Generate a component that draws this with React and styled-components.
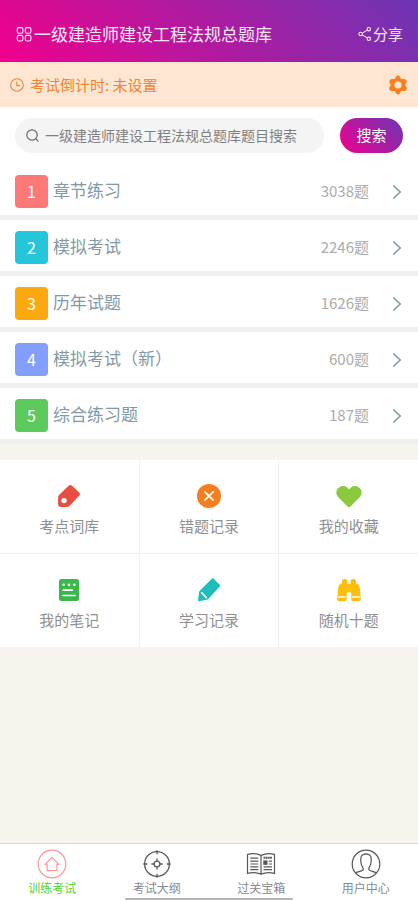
import React, { useState } from 'react';
import styled, { createGlobalStyle } from 'styled-components';

const GlobalStyle = createGlobalStyle`
  * {
    box-sizing: border-box;
  }
  body {
    margin: 0;
    background: #f7f4ed;
    font-family: "Noto Sans CJK SC", "Noto Sans", sans-serif;
  }
  button, input {
    font-family: inherit;
    border: 0;
    padding: 0;
  }
  button {
    background: none;
    cursor: pointer;
  }
  a {
    text-decoration: none;
  }
  svg {
    display: block;
    flex: none;
  }
`;

const Page = styled.div`
  display: flex;
  flex-direction: column;
  min-height: 100vh;
`;

const Header = styled.header`
  display: flex;
  align-items: center;
  justify-content: space-between;
  height: 62px;
  padding: 6px 15px 0 16px;
  background: linear-gradient(45deg, #f0008c, #6c36b4);
  color: #fbe6f6;
`;

const Title = styled.h1`
  display: flex;
  align-items: center;
  gap: 1px;
  margin: 0;
  font-size: 17px;
  line-height: 24px;
  font-weight: 400;
`;

const ShareButton = styled.button`
  display: flex;
  align-items: center;
  gap: 1px;
  color: inherit;
  font-size: 15px;
  line-height: 24px;
`;

const Countdown = styled.div`
  display: flex;
  align-items: center;
  height: 45px;
  padding: 0 10px;
  background: #fee6d2;
  color: #f58230;
  font-size: 15px;
  line-height: 24px;
  span {
    flex: 1;
    margin-left: 6px;
  }
`;

const IconButton = styled.button`
  color: #fa7d1e;
`;

const SearchForm = styled.form`
  display: flex;
  gap: 16px;
  padding: 11px 15px;
  background: #fff;
`;

const SearchBox = styled.label`
  display: flex;
  flex: 1;
  align-items: center;
  gap: 6px;
  height: 35px;
  min-width: 0;
  padding: 0 11px;
  border-radius: 18px;
  background: #f4f4f4;
  color: #666;
  input {
    flex: 1;
    min-width: 0;
    height: 22px;
    margin-bottom: 2px;
    background: none;
    color: #666;
    font-size: 14px;
    outline: 0;
  }
  input::placeholder {
    color: #808080;
    opacity: 1;
  }
`;

const SearchButton = styled.button`
  width: 63px;
  height: 35px;
  padding-bottom: 2px;
  border-radius: 18px;
  background: linear-gradient(45deg, #f0008c, #6c36b4);
  color: #fff;
  font-size: 15px;
  line-height: 24px;
`;

const Rows = styled.div`
  display: flex;
  flex-direction: column;
`;

const Row = styled.a`
  display: flex;
  align-items: center;
  height: 56px;
  padding: 0 16px 0 15px;
  border-bottom: 5px solid #efefef;
  background: #fff;
  color: #829aa5;
`;

const Badge = styled.span`
  width: 33px;
  height: 33px;
  margin-top: 4px;
  border-radius: 4px;
  background: ${props => props.$color};
  color: #fff;
  font-size: 16px;
  line-height: 33px;
  text-align: center;
`;

const RowName = styled.span`
  flex: 1;
  margin-left: 5px;
  font-size: 17px;
  line-height: 24px;
`;

const RowCount = styled.span`
  margin: 2px 23px 0 0;
  color: #acacac;
  font-size: 15px;
  line-height: 24px;
`;

const RowArrow = styled.svg`
  margin-top: 4px;
`;

const Tools = styled.div`
  display: grid;
  grid-template-columns: repeat(3, 1fr);
  gap: 1px;
  margin-top: 16px;
  background: #f0f0f0;
`;

const Tool = styled.a`
  display: flex;
  flex-direction: column;
  align-items: center;
  gap: 4px;
  height: 93px;
  padding-top: 22px;
  background: #fff;
  color: #8f8f8f;
  font-size: 15px;
  line-height: 24px;
`;

const TabBar = styled.nav`
  position: relative;
  display: flex;
  height: 57px;
  margin-top: auto;
  border-top: 1px solid #dcdad6;
  background: #fff;
`;

const Tab = styled.a`
  display: flex;
  flex: 1;
  flex-direction: column;
  align-items: center;
  padding-top: 5px;
  color: ${props => (props.$active ? '#4fd435' : '#888a90')};
  font-size: 12px;
  line-height: 18px;
  svg {
    color: ${props => (props.$active ? '#fd9797' : '#58595c')};
  }
`;

// system gesture handle, drawn over the tab bar
const HomeHandle = styled.div`
  position: absolute;
  bottom: 0;
  left: 30%;
  right: 30%;
  height: 2px;
  border-radius: 1px;
  background: #b4b4b4;
`;

const sections = [
  { name: '章节练习', count: 3038, color: '#ff7878' },
  { name: '模拟考试', count: 2246, color: '#25c6da' },
  { name: '历年试题', count: 1626, color: '#fca811' },
  { name: '模拟考试（新）', count: 600, color: '#829fff' },
  { name: '综合练习题', count: 187, color: '#5acb5c' }
];

const MenuIcon = () => (
  <svg width="17" height="17" viewBox="0 0 17 17" fill="none" stroke="currentColor" strokeWidth="1.1">
    <rect x="1.3" y="1.6" width="5.6" height="5.6" rx="1.5" />
    <rect x="9.3" y="1.6" width="5.6" height="5.6" rx="1.5" />
    <rect x="1.3" y="9.4" width="5.6" height="5.6" rx="1.5" />
    <rect x="9.3" y="9.4" width="5.6" height="5.6" rx="1.5" />
  </svg>
);

const ShareIcon = () => (
  <svg width="14" height="16" viewBox="0 0 14 16" fill="none" stroke="currentColor" strokeWidth="1.1">
    <circle cx="2.6" cy="8" r="1.8" />
    <circle cx="10.8" cy="3.2" r="1.7" />
    <circle cx="10.8" cy="12.8" r="1.7" />
    <path d="M4.2 7.1 9.3 4.1M4.2 8.9l5.1 3" />
  </svg>
);

const ClockIcon = () => (
  <svg width="14" height="14" viewBox="0 0 14 14" fill="none" stroke="currentColor" strokeWidth="1.1">
    <circle cx="7" cy="7" r="6.3" />
    <path d="M6.8 3.4v4.2H10" />
  </svg>
);

const GearIcon = () => (
  <svg width="20" height="20" viewBox="0 0 20 20">
    <path
      d="M8.3 1.2Q10 -.2 11.7 1.2L13.2 3.9 16.8 4Q18.9 4.9 18.8 7L17.2 10 18.8 13Q18.9 15.1 16.8 16L13.2 16.1 11.7 18.8Q10 20.2 8.3 18.8L6.8 16.1 3.2 16Q1.1 15.1 1.2 13L2.8 10 1.2 7Q1.1 4.9 3.2 4L6.8 3.9Z"
      fill="currentColor"
    />
    <circle cx="10" cy="10" r="3.6" fill="#fee6d2" />
  </svg>
);

const SearchIcon = () => (
  <svg width="13" height="13" viewBox="0 0 13 13" fill="none" stroke="currentColor" strokeWidth="1.2" strokeLinecap="round">
    <circle cx="6" cy="6" r="5.2" />
    <path d="m9.8 9.8 2.3 2.3" />
  </svg>
);

const TagIcon = () => (
  <svg width="28" height="28" viewBox="0 0 28 28">
    <path d="M13.6 3.7Q15.3 2.2 17 3.7L24.2 10.4Q25.8 12 24.4 13.6L15.5 23Q13.9 24.9 11.5 24.9H6Q3.1 24.9 3.1 22V15.6Q3.1 14 4.3 12.8Z" fill="#e74e43" />
    <circle cx="9" cy="18.6" r="2.7" fill="#fff" />
  </svg>
);

const WrongIcon = () => (
  <svg width="28" height="28" viewBox="0 0 28 28">
    <circle cx="14" cy="14" r="12" fill="#f77d1e" />
    <path d="m9.8 9.8 8.4 8.4m0-8.4-8.4 8.4" stroke="#fff" strokeWidth="1.7" strokeLinecap="round" />
  </svg>
);

const HeartIcon = () => (
  <svg width="28" height="28" viewBox="0 0 28 28">
    <path d="M12.5 24.5 3.3 15.2C.7 12.5.8 8.2 3.2 6 5.9 3.4 9.6 3.4 12 5.4L14 7.2l2-1.8c2.4-2 6.1-2 8.8.6 2.4 2.2 2.5 6.5-.1 9.2L15.5 24.5q-1.5 1.5-3 0Z" fill="#8dc93f" />
  </svg>
);

const NoteIcon = () => (
  <svg width="28" height="28" viewBox="0 0 28 28">
    <rect x="4" y="3" width="20" height="22" rx="2.5" fill="#3ab84c" />
    <g stroke="#fff" strokeWidth="1.7" strokeLinecap="round">
      <path d="M8.3 14.2h9M8 19.5h12" />
    </g>
    <g fill="#fff">
      <circle cx="8.6" cy="8.7" r="1.3" />
      <circle cx="14" cy="8.7" r="1.3" />
      <circle cx="19.4" cy="8.7" r="1.3" />
    </g>
  </svg>
);

const PencilIcon = () => (
  <svg width="28" height="28" viewBox="0 0 28 28">
    <path d="M17.1 2.4Q17.8 1.7 18.5 2.4L25 8.9Q25.6 9.6 25 10.3L12.9 23.6 3.8 25.2Q2.9 25.3 3 24.4L4.3 15.2Z" fill="#1fbdb8" />
    <path d="m6.2 16.2 5.6 5.9" stroke="#fff" strokeWidth="1.6" />
  </svg>
);

const BinocularsIcon = () => (
  <svg width="28" height="28" viewBox="0 0 28 28">
    <path
      d="M6.9 5.4Q6.9 3 9.2 3H10.2Q12.5 3 12.5 5.4V8H15.5V5.4Q15.5 3 17.8 3H18.8Q21.1 3 21.1 5.4V7.6Q24.6 8.4 24.8 12L25.8 22.6Q25.8 25.3 23.4 25.3H18.8Q16.3 25.3 16.3 22.8V17.4Q16.3 16.2 15.1 16.2H12.9Q11.7 16.2 11.7 17.4V22.8Q11.7 25.3 9.2 25.3H4.6Q2.2 25.3 2.2 22.6L3.2 12Q3.4 8.4 6.9 7.6Z"
      fill="#fcc00c"
    />
    <path d="M3.2 21.1H10.7M17.3 21.1H24.8" stroke="#fff" strokeWidth="1.5" />
  </svg>
);

const HomeIcon = () => (
  <svg width="30" height="30" viewBox="0 0 30 30" fill="none" stroke="currentColor" strokeWidth="1.2">
    <circle cx="15" cy="15" r="13.8" />
    <path d="M8.3 15.4 15 8.3l6.7 7.1h-1.8v6.3h-9.8v-6.3Z" />
  </svg>
);

const TargetIcon = () => (
  <svg width="30" height="30" viewBox="0 0 30 30" fill="none" stroke="currentColor" strokeWidth="1.3">
    <circle cx="15" cy="15" r="12.4" />
    <circle cx="15" cy="15" r="2.9" />
    <path d="M15 1.3v4M15 24.7v4M1.3 15h4M24.7 15h4M15 9.4v2.7M15 17.9v2.7M9.4 15h2.7M17.9 15h2.7" />
  </svg>
);

const BookIcon = () => (
  <svg width="30" height="30" viewBox="0 0 30 30" fill="none" stroke="currentColor" strokeWidth="1.2">
    <path d="M15 6.4Q8.5 3.3 1.5 5.4V24.4Q8.5 22.4 15 25.1 21.5 22.4 28.5 24.4V5.4Q21.5 3.3 15 6.4ZM15 6.4V25" />
    <path d="M4.3 9.2h8M4.3 12.1h8M4.3 15h8M4.3 17.9h8M4.3 20.6h8M22.8 12.1h3.2M22.8 15h3.2M17.5 17.9H26M17.5 20.6H26" />
    <path d="M17.5 8.7H26" strokeWidth="2" strokeDasharray="1.8 .4" />
    <rect x="17.9" y="12" width="3" height="3.2" fill="currentColor" />
  </svg>
);

const UserIcon = () => (
  <svg width="30" height="30" viewBox="0 0 30 30" fill="none" stroke="currentColor" strokeWidth="1.2">
    <circle cx="15" cy="15" r="13.8" />
    <path d="M4.6 24.1C7 22 12 22.6 12.3 20.3 12.5 18.7 10.8 17.7 10.2 14.8 9.2 9.3 9.4 5 15 4.8 20.6 5 20.8 9.3 19.8 14.8 19.2 17.7 17.5 18.7 17.7 20.3 18 22.6 23 22 25.4 24.1" />
  </svg>
);

const tools = [
  { name: '考点词库', Icon: TagIcon },
  { name: '错题记录', Icon: WrongIcon },
  { name: '我的收藏', Icon: HeartIcon },
  { name: '我的笔记', Icon: NoteIcon },
  { name: '学习记录', Icon: PencilIcon },
  { name: '随机十题', Icon: BinocularsIcon }
];

const tabs = [
  { name: '训练考试', Icon: HomeIcon },
  { name: '考试大纲', Icon: TargetIcon },
  { name: '过关宝箱', Icon: BookIcon },
  { name: '用户中心', Icon: UserIcon }
];

const App = () => {
  const [keyword, setKeyword] = useState('');
  const [activeTab, setActiveTab] = useState(0);

  return (
    <Page>
      <GlobalStyle />
      <Header>
        <Title><MenuIcon />一级建造师建设工程法规总题库</Title>
        <ShareButton type="button"><ShareIcon />分享</ShareButton>
      </Header>
      <Countdown>
        <ClockIcon />
        <span>考试倒计时: 未设置</span>
        <IconButton type="button" aria-label="设置"><GearIcon /></IconButton>
      </Countdown>
      <SearchForm onSubmit={e => e.preventDefault()}>
        <SearchBox htmlFor="keyword">
          <SearchIcon />
          <input
            id="keyword"
            type="text"
            aria-label="搜索题目"
            placeholder="一级建造师建设工程法规总题库题目搜索"
            value={keyword}
            onChange={e => setKeyword(e.target.value)}
          />
        </SearchBox>
        <SearchButton type="submit">搜索</SearchButton>
      </SearchForm>
      <Rows>
        {sections.map(({ name, count, color }, i) => (
          <Row href="#" key={name}>
            <Badge $color={color}>{i + 1}</Badge>
            <RowName>{name}</RowName>
            <RowCount>{count}题</RowCount>
            <RowArrow width="10" height="16" viewBox="0 0 10 16" fill="none" stroke="currentColor" strokeWidth="1.6">
              <path d="m1.3 1.5 6.9 6.5-6.9 6.5" />
            </RowArrow>
          </Row>
        ))}
      </Rows>
      <Tools>
        {tools.map(({ name, Icon }) => (
          <Tool href="#" key={name}><Icon />{name}</Tool>
        ))}
      </Tools>
      <TabBar>
        {tabs.map(({ name, Icon }, i) => (
          <Tab href="#" key={name} $active={i === activeTab} onClick={() => setActiveTab(i)}>
            <Icon />
            {name}
          </Tab>
        ))}
        <HomeHandle />
      </TabBar>
    </Page>
  );
};

export default App;
